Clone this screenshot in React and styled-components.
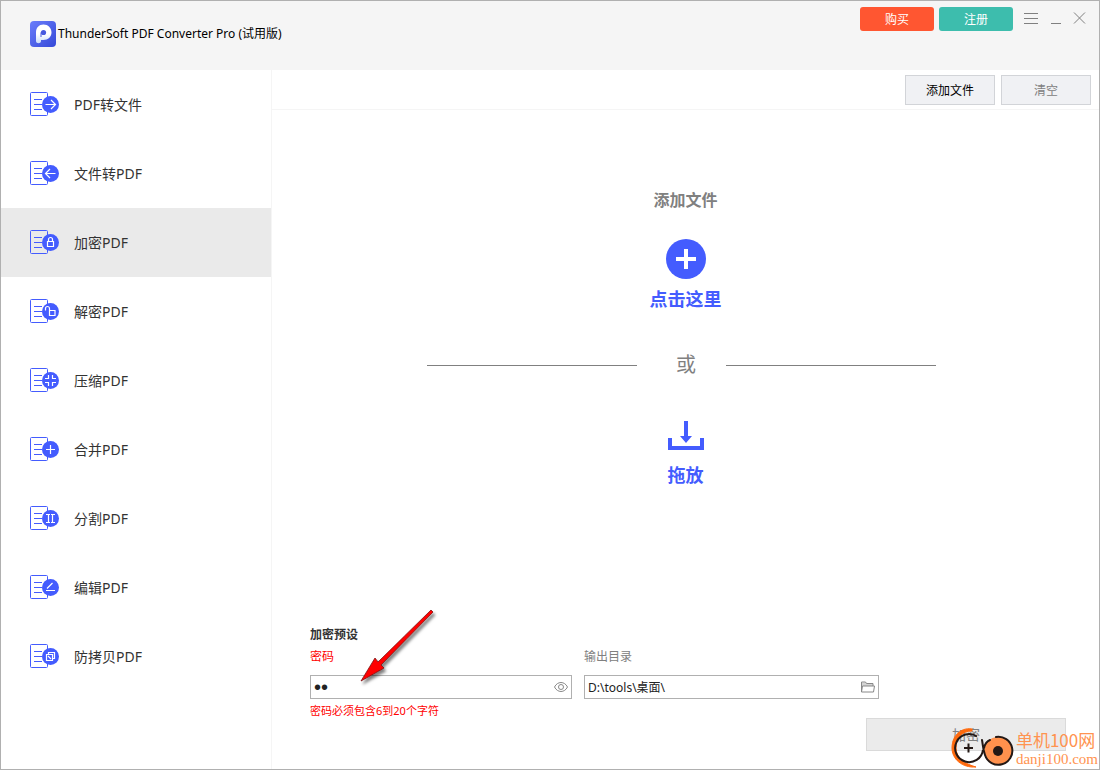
import React from "react"
import styled, { createGlobalStyle } from "styled-components"

const palette = {
  primary: "#445cfe",
  buy: "#ff5631",
  register: "#3dbdad",
  header: "#f5f5f5",
  selected: "#eaeaea",
  line: "#f5f5f5",
  frame: "#b0b0b0",
  text: "#333333",
  muted: "#808080",
  error: "#ff0000",
}

const GlobalStyle = createGlobalStyle`
  * {
    box-sizing: border-box;
  }

  body {
    margin: 0;
    background: #ffffff;
    color: ${palette.text};
    font-family: "Noto Sans", "Noto Sans CJK SC", sans-serif;
    font-size: 12px;
  }

  button, input {
    font-family: inherit;
    font-size: inherit;
  }

  button {
    padding: 0;
    cursor: pointer;
  }

  svg {
    display: block;
    flex: none;
  }
`

const Window = styled.div`
  position: relative;
  display: flex;
  flex-direction: column;
  min-height: 100vh;
  border: 1px solid ${palette.frame};
`

const Header = styled.header`
  display: flex;
  justify-content: space-between;
  align-items: flex-start;
  height: 69px;
  padding: 6px 12px 0 29px;
  background: ${palette.header};
`

const Brand = styled.div`
  display: flex;
  align-items: center;
  gap: 2px;
  padding-top: 14px;
`

const BrandName = styled.h1`
  margin: 0;
  color: #000000;
  font-size: 12px;
  font-weight: 400;
  line-height: 26px;
`

const HeaderActions = styled.div`
  display: flex;
  align-items: center;
  gap: 5px;
`

const HeaderButton = styled.button`
  width: 74px;
  height: 24px;
  border: 0;
  border-radius: 3px;
  background: ${props => props.$color};
  color: #ffffff;
`

const WindowControls = styled.div`
  display: flex;
  gap: 8px;
  padding-left: 5px;
`

const ControlButton = styled.button`
  border: 0;
  background: transparent;
`

const Body = styled.div`
  display: flex;
  flex: 1;
`

const Sidebar = styled.nav`
  flex: none;
  width: 271px;
  border-right: 1px solid ${palette.line};
`

const SidebarItem = styled.button`
  display: flex;
  align-items: center;
  gap: 14px;
  width: 100%;
  height: 69px;
  padding: 0 0 2px 29px;
  border: 0;
  background: ${props => (props.$active ? palette.selected : "transparent")};
  color: ${palette.text};
  font-size: 14px;
`

const Main = styled.main`
  display: flex;
  flex: 1;
  flex-direction: column;
  min-width: 0;
`

const Toolbar = styled.div`
  display: flex;
  justify-content: flex-end;
  gap: 6px;
  height: 40px;
  padding: 5px 8px 0;
  border-bottom: 1px solid ${palette.line};
`

const ToolbarButton = styled.button`
  width: 90px;
  height: 30px;
  border: 1px solid #d2d4d8;
  background: #f0f1f4;
  color: ${props => (props.$muted ? palette.muted : "#000000")};
`

const DropArea = styled.section`
  display: flex;
  flex: 1;
  flex-direction: column;
  align-items: center;
  padding: 80px 0 40px;
`

const DropTitle = styled.h2`
  margin: 0 0 29px;
  color: ${palette.muted};
  font-size: 16px;
  font-weight: 600;
  line-height: 20px;
`

const AddButton = styled.button`
  display: flex;
  flex-direction: column;
  align-items: center;
  gap: 8px;
  border: 0;
  background: transparent;
  color: ${palette.primary};
`

const ActionText = styled.span`
  color: ${palette.primary};
  font-size: 18px;
  font-weight: 700;
  line-height: 24px;
`

const Divider = styled.div`
  display: flex;
  align-items: center;
  align-self: stretch;
  justify-content: center;
  margin: 42px 8px 44px 0;
`

const DividerLine = styled.div`
  width: 210px;
  height: 1px;
  background: ${palette.muted};
`

const DividerText = styled.span`
  margin: 0 30px 0 39px;
  color: ${palette.muted};
  font-size: 20px;
  line-height: 24px;
`

const DropTarget = styled.div`
  display: flex;
  flex-direction: column;
  align-items: center;
  gap: 12px;
`

const Preset = styled.form`
  position: relative;
  padding: 0 33px 18px 38px;
`

const PresetTitle = styled.h2`
  margin: 0;
  font-size: 12px;
  font-weight: 600;
  line-height: 22px;
`

const Fields = styled.div`
  display: flex;
  align-items: flex-start;
  gap: 12px;
`

const Field = styled.div`
  flex: none;
  width: ${props => props.$width};
`

const FieldLabel = styled.label`
  display: block;
  margin-bottom: 7px;
  color: ${props => (props.$error ? palette.error : palette.muted)};
  line-height: 22px;
`

const InputBox = styled.div`
  display: flex;
  align-items: center;
  height: 24px;
  padding: 0 3px;
  border: 1px solid ${palette.frame};
`

const TextInput = styled.input`
  flex: 1;
  min-width: 0;
  height: 22px;
  padding: 0;
  border: 0;
  outline: 0;
  background: transparent;
  color: #222222;

  &[type="password"] {
    font-family: "Liberation Sans", sans-serif;
    font-size: 20px;
  }
`

const InputButton = styled.button`
  border: 0;
  background: transparent;
`

const Hint = styled.p`
  margin: 4px 0 0;
  color: ${palette.error};
  font-size: 11px;
  line-height: 15px;
`

const SubmitRow = styled.div`
  display: flex;
  justify-content: flex-end;
`

const SubmitButton = styled.button`
  width: 200px;
  height: 33px;
  padding-bottom: 2px;
  border: 1px solid #dadada;
  background: #ebebeb;
  color: ${palette.muted};
  font-size: 14px;
`

const Pointer = styled.svg`
  position: absolute;
  left: 85px;
  top: -20px;
  pointer-events: none;
`

const Watermark = styled.div`
  position: absolute;
  right: 1px;
  bottom: 0;
  display: flex;
  align-items: center;
  gap: 2px;
  color: #ff9350;
  pointer-events: none;
`

const WatermarkText = styled.div`
  display: flex;
  flex-direction: column;
  padding-top: 2px;
`

const WatermarkName = styled.span`
  font-family: "Noto Sans CJK SC", sans-serif;
  font-size: 17px;
  line-height: 20px;
`

const WatermarkSite = styled.span`
  font-family: "Liberation Serif", serif;
  font-size: 15px;
  line-height: 18px;
`

const items = [
  { id: "from", label: "PDF转文件", glyph: <path d="M15.5 12.5h10M21 8l4.5 4.5L21 17" /> },
  { id: "to", label: "文件转PDF", glyph: <path d="M25.5 12.5h-10M20 8l-4.5 4.5L20 17" /> },
  {
    id: "encrypt",
    label: "加密PDF",
    glyph: <path d="M17.5 11.5h6v5h-6zM18.5 11.5V9.5a2 2 0 0 1 4 0v2" />,
  },
  {
    id: "decrypt",
    label: "解密PDF",
    glyph: <path d="M19.5 11.5h5.5v5h-5.5zM19.5 11.5V9.5a2 2 0 0 0-4 0v2" />,
  },
  {
    id: "compress",
    label: "压缩PDF",
    glyph: <path d="M15 10.5h3.5V7M15 14.5h3.5V18M26 10.5h-3.5V7M26 14.5h-3.5V18" />,
  },
  { id: "merge", label: "合并PDF", glyph: <path d="M16 12.5h9M20.5 8v9" /> },
  {
    id: "split",
    label: "分割PDF",
    glyph: <path d="M16 8.5h4M16 16.5h4M18.5 8.5v8M25 8.5h-4M25 16.5h-4M22.5 8.5v8" />,
  },
  { id: "edit", label: "编辑PDF", glyph: <path d="M16 15.5h9M17 13.5l5.5-5.5" /> },
  {
    id: "protect",
    label: "防拷贝PDF",
    glyph: <path d="M16.5 10.5h6v6h-6zM18.5 10.5v-2h6v6h-2M18 12l3 3" />,
  },
]

const DocumentIcon = ({ children }) => (
  <svg width="30" height="24" viewBox="0 0 30 24" fill="none" aria-hidden="true">
    <rect x=".5" y=".5" width="17" height="23" rx="1" stroke={palette.primary} />
    <path d="M4 7.5h8M4 12.5h8M4 17.5h8" stroke={palette.primary} />
    <circle cx="20.5" cy="12.5" r="8.5" fill={palette.primary} />
    <g stroke="#ffffff" strokeWidth="1.2">{children}</g>
  </svg>
)

const Logo = () => (
  <svg width="26" height="26" viewBox="0 0 26 26" aria-hidden="true">
    <defs>
      <linearGradient id="logoFill" x1="0" y1="0" x2="1" y2="1">
        <stop offset="0" stopColor="#6a7dfb" />
        <stop offset="1" stopColor="#3549d8" />
      </linearGradient>
      <linearGradient id="logoStem" x1="0" y1="0" x2="0" y2="1">
        <stop offset=".5" stopColor="#ffffff" />
        <stop offset="1" stopColor="#c9dcfa" />
      </linearGradient>
    </defs>
    <rect width="26" height="26" rx="4" fill="url(#logoFill)" />
    <path
      d="M6 20V11.500C6 6.500 9 3.500 13.500 3.500S21.500 7 21.500 11.500 18 19 13.500 19H11v1c0 3-5 3-5 0z"
      fill="url(#logoStem)"
    />
    <circle cx="13.500" cy="11.500" r="2.600" fill="#4659df" />
    <path d="M11 16v-4.500" stroke="#4659df" strokeWidth="1" />
  </svg>
)

const WatermarkLogo = () => (
  <svg width="64" height="42" viewBox="0 0 64 42" fill="none" aria-hidden="true">
    <path
      d="M22 2C10 0 2 10 2 21c0 11 10 20 24 19-11-3-20-9-20-19C6 11 12 4 22 4z"
      fill="#ff6a0d"
      stroke="#ff6a0d"
      strokeLinejoin="round"
    />
    <path d="M27 9.500A14 14 0 1 0 33 23" stroke="#231815" strokeWidth="2" />
    <path d="M14 21h9M18.500 16.500v9" stroke="#231815" strokeWidth="2" />
    <circle cx="48" cy="24" r="14" fill="#ff914d" />
    <path
      d="M32 13c1 5 1 10 3 15a14 14 0 1 0 11-18M34 21c1-4 3-7 6-8"
      stroke="#231815"
      strokeWidth="2"
      strokeLinecap="round"
    />
    <circle cx="48" cy="24" r="5" fill="#231815" />
  </svg>
)

const App = () => {
  const [selected, select] = React.useState("encrypt")
  const [password, setPassword] = React.useState("12")
  const [visible, setVisible] = React.useState(false)
  const [folder, setFolder] = React.useState("D:\\tools\\桌面\\")
  const invalid = password.length < 6 || password.length > 20

  return (
    <Window lang="zh-CN">
      <GlobalStyle />
      <Header>
        <Brand>
          <Logo />
          <BrandName>ThunderSoft PDF Converter Pro (试用版)</BrandName>
        </Brand>
        <HeaderActions>
          <HeaderButton $color={palette.buy}>购买</HeaderButton>
          <HeaderButton $color={palette.register}>注册</HeaderButton>
          <WindowControls>
            <ControlButton aria-label="菜单">
              <svg width="16" height="16" fill="none" stroke="#808080">
                <path d="M1 2.500h14M1 7.500h14M1 12.500h14" />
              </svg>
            </ControlButton>
            <ControlButton aria-label="最小化">
              <svg width="16" height="16" fill="none" stroke="#808080">
                <path d="M4 12.500h10" />
              </svg>
            </ControlButton>
            <ControlButton aria-label="关闭">
              <svg width="16" height="16" fill="none" stroke="#808080">
                <path d="M3 1.500l11 11M14 1.500l-11 11" />
              </svg>
            </ControlButton>
          </WindowControls>
        </HeaderActions>
      </Header>
      <Body>
        <Sidebar>
          {items.map(item => (
            <SidebarItem
              key={item.id}
              $active={item.id === selected}
              onClick={() => select(item.id)}
            >
              <DocumentIcon>{item.glyph}</DocumentIcon>
              {item.label}
            </SidebarItem>
          ))}
        </Sidebar>
        <Main>
          <Toolbar>
            <ToolbarButton>添加文件</ToolbarButton>
            <ToolbarButton $muted>清空</ToolbarButton>
          </Toolbar>
          <DropArea>
            <DropTitle>添加文件</DropTitle>
            <AddButton>
              <svg width="40" height="40" aria-hidden="true">
                <circle cx="20" cy="20" r="20" fill={palette.primary} />
                <path d="M10 20h20M20 10v20" stroke="#ffffff" strokeWidth="4" />
              </svg>
              <ActionText>点击这里</ActionText>
            </AddButton>
            <Divider>
              <DividerLine />
              <DividerText>或</DividerText>
              <DividerLine />
            </Divider>
            <DropTarget>
              <svg width="36" height="30" fill={palette.primary} aria-hidden="true">
                <path d="M16 0h4v15h4l-6 7-6-7h4z" />
                <path d="M0 17h4v8h28v-8h4v12H0z" />
              </svg>
              <ActionText>拖放</ActionText>
            </DropTarget>
          </DropArea>
          <Preset onSubmit={e => e.preventDefault()}>
            <PresetTitle>加密预设</PresetTitle>
            <Fields>
              <Field $width="262px">
                <FieldLabel htmlFor="password" $error={invalid}>密码</FieldLabel>
                <InputBox>
                  <TextInput
                    id="password"
                    type={visible ? "text" : "password"}
                    autoComplete="off"
                    value={password}
                    onChange={e => setPassword(e.target.value)}
                  />
                  <InputButton type="button" aria-label="显示密码" onClick={() => setVisible(!visible)}>
                    <svg width="14" height="12" fill="none" stroke="#888888">
                      <path d="M.5 6C3.500 0 10.500 0 13.500 6 10.500 12 3.500 12 .5 6z" />
                      <circle cx="7" cy="6" r="2.500" />
                    </svg>
                  </InputButton>
                </InputBox>
                {invalid && <Hint>密码必须包含6到20个字符</Hint>}
              </Field>
              <Field $width="295px">
                <FieldLabel htmlFor="folder">输出目录</FieldLabel>
                <InputBox>
                  <TextInput
                    id="folder"
                    type="text"
                    value={folder}
                    onChange={e => setFolder(e.target.value)}
                  />
                  <InputButton type="button" aria-label="浏览">
                    <svg width="14" height="12" fill="none" stroke="#888888">
                      <path d="M1 5V1.500h4l1 1.500h6v2z" fill="#d4d4d4" stroke="none" />
                      <path d="M.5 11V1h4l1 1.500h6.500V5M.5 11l1-6H13.500l-1 6z" />
                    </svg>
                  </InputButton>
                </InputBox>
              </Field>
            </Fields>
            <SubmitRow>
              <SubmitButton type="submit">加密</SubmitButton>
            </SubmitRow>
            <Pointer width="82" height="84" aria-hidden="true">
              <defs>
                <filter id="pointerShadow" x="-20%" y="-20%" width="150%" height="150%">
                  <feDropShadow dx="2" dy="3" stdDeviation="1.5" floodOpacity=".5" />
                </filter>
              </defs>
              <path
                d="M4 77l14-23 3 4L74 6l2 2L24 61l3 3z"
                fill="#ff0000"
                stroke="#7c1111"
                strokeWidth=".8"
                filter="url(#pointerShadow)"
              />
            </Pointer>
          </Preset>
        </Main>
      </Body>
      <Watermark>
        <WatermarkLogo />
        <WatermarkText>
          <WatermarkName>单机100网</WatermarkName>
          <WatermarkSite>danji100.com</WatermarkSite>
        </WatermarkText>
      </Watermark>
    </Window>
  )
}

export default App
